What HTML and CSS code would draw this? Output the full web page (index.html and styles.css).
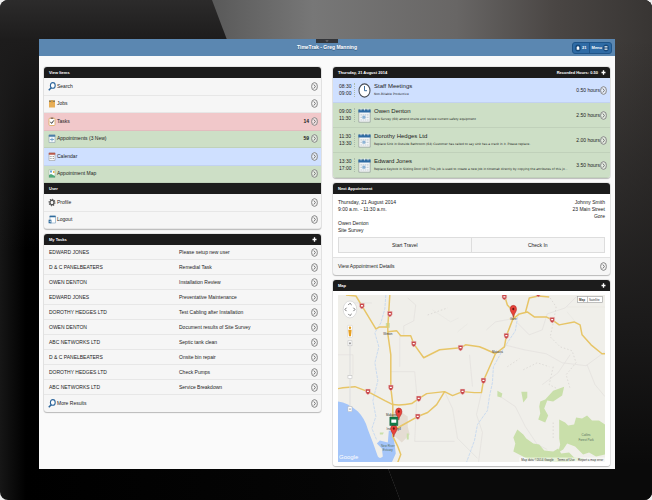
FILE: index.html
```html
<!DOCTYPE html>
<html lang="en">
<head>
<meta charset="utf-8">
<meta name="viewport" content="width=device-width, initial-scale=1">
<title>TimeTrak - Greg Manning</title>
<link rel="stylesheet" href="styles.css">
</head>
<body>
<svg class="sprites" aria-hidden="true">
  <symbol id="go" viewBox="0 0 7 9"><ellipse cx="3.5" cy="4.5" rx="2.9" ry="3.9" fill="#f4f4f4" fill-opacity=".6" stroke="#868686" stroke-width="1"/><path d="M2.8 2.5 4.4 4.5 2.8 6.500" fill="none" stroke="#777" stroke-width="1"/></symbol>
  <symbol id="search" viewBox="0 0 8 9"><ellipse cx="4.8" cy="3.4" rx="2.4" ry="2.8" fill="#fff" stroke="#2d659b" stroke-width="1.1"/><path d="M3.2 5.7.8 8.3" stroke="#2d659b" stroke-width="1.5"/></symbol>
  <symbol id="box" viewBox="0 0 8 9"><path d="M1 1.5h6v7H1z" fill="#e8ae55"/><path d="M1 1.5h6v1.4H1z" fill="#8a7a55"/><path d="M3 1.5h2v2H3z" fill="#d69a3c"/></symbol>
  <symbol id="task" viewBox="0 0 8 9"><rect x="1" y="1.2" width="6" height="7.3" rx="1" fill="#fff" stroke="#dda85a" stroke-width=".8"/><path d="M2.7.5h2.6v1.4H2.7z" fill="#8a7060"/><path d="m2.4 4.8 1.2 1.6 2.2-3" fill="none" stroke="#333" stroke-width="1"/></symbol>
  <symbol id="cal" viewBox="0 0 8 9"><path d="M1 1h6v7.5H1z" fill="#f2f7fa" stroke="#8aa0ad" stroke-width=".6"/><path d="M.8.8h6.4v2H.8z" fill="#4a7ea8"/><path d="M2 5.5h4M4 3.8v3.5" stroke="#6f9fc8" stroke-width=".9"/></symbol>
  <symbol id="calred" viewBox="0 0 8 9"><path d="M1 1h6v7.5H1z" fill="#fafafa" stroke="#9a9a9a" stroke-width=".6"/><path d="M.8.8h6.4v2H.8z" fill="#b9584a"/><path d="M1.8 4.5h4.4M1.8 6.5h4.4" stroke="#999" stroke-width=".9" stroke-dasharray="1 .6"/></symbol>
  <symbol id="map" viewBox="0 0 8 9"><path d="M1 .8h6v7.7H1z" fill="#fff" stroke="#9cb59c" stroke-width=".6"/><path d="m1 6 2-1 2 1 2 1v1.5H1z" fill="#50a878"/><path d="M2 1.5h2v2H2z" fill="#6aa5d8"/><path d="M5 2h1.5v2H5z" fill="#e7b44f"/></symbol>
  <symbol id="gear" viewBox="0 0 8 9"><ellipse cx="4" cy="4.5" rx="2.9" ry="3.3" fill="none" stroke="#4c4c4c" stroke-width="1.1" stroke-dasharray="1.2 1.2"/><ellipse cx="4" cy="4.5" rx="2" ry="2.4" fill="none" stroke="#4c4c4c" stroke-width="1.2"/></symbol>
  <symbol id="exit" viewBox="0 0 8 9"><path d="M2 1h5.5v7H2z" fill="#fff" stroke="#7ba0bd" stroke-width=".6"/><path d="M1.6.7h6v1.6h-6z" fill="#2f6b9d"/><path d="M.6 4.8h2.8v3.4H.6z" fill="#2f6b9d"/><path d="m1.4 6.5 1.2-.9v1.8z" fill="#fff"/></symbol>
  <symbol id="clock" viewBox="0 0 13 15"><ellipse cx="6.5" cy="7.5" rx="5.5" ry="6.6" fill="#fff" stroke="#4a4f57" stroke-width="1.1"/><path d="M6.5 3v4.7H9" fill="none" stroke="#3e6f9e" stroke-width="1"/></symbol>
  <symbol id="bigcal" viewBox="0 0 13 15"><path d="M.8 1.8h11.4v12.4H.8z" fill="#f4f6f7" stroke="#97a29a" stroke-width=".8"/><path d="M.4 1.4h12.2v3.2H.4z" fill="#2e6ba3"/><path d="M3 0v2.4M6.5 0v2.4M10 0v2.4" stroke="#dfe8ef" stroke-width=".9"/><path d="M2.4 6.8h8.4M2.4 9.4h8.4M2.4 12h8.4" stroke="#c6d0d8" stroke-width="1.2" stroke-dasharray="1.6 .6"/><path d="M4.4 7.7h3v3h-3z" fill="#8db4d6"/></symbol>
  <symbol id="plus" viewBox="0 0 6 7"><path d="M3 .8v5.4M.6 3.5h4.8" stroke="#fff" stroke-width="1.6"/></symbol>
</svg>
<div class="tablet">
<div class="screen">
  <header class="topbar">
    <span class="pull" aria-hidden="true"><svg viewBox="0 0 22 4"><path d="m10 1.2 1 1.3 1-1.3" fill="none" stroke="#aaa" stroke-width=".6"/></svg></span>
    <h1>TimeTrak - Greg Manning</h1>
    <div class="actions">
      <button type="button"><svg class="ai" viewBox="0 0 7 9"><ellipse cx="3.5" cy="4.5" rx="3.3" ry="4" fill="#194a7b"/><path d="M3.5 2 5 4v2.5H2V4z" fill="#fff"/></svg>21</button>
      <button type="button">Menu<svg class="ai" viewBox="0 0 7 9"><ellipse cx="3.5" cy="4.5" rx="3.3" ry="4" fill="#194a7b"/><path d="M1.8 2.8h3.4M1.8 4.5h3.4M1.8 6.2h3.4" stroke="#fff" stroke-width=".9"/></svg></button>
    </div>
  </header>
  <main class="columns">
    <div class="column">
      <nav class="panel">
        <h2>View Items</h2>
        <ul class="menu six">
          <li><a href="#"><svg class="ic"><use href="#search"/></svg>Search<svg class="go"><use href="#go"/></svg></a></li>
          <li><a href="#"><svg class="ic"><use href="#box"/></svg>Jobs<svg class="go"><use href="#go"/></svg></a></li>
          <li class="red"><a href="#"><svg class="ic"><use href="#task"/></svg>Tasks<b class="count">14</b><svg class="go"><use href="#go"/></svg></a></li>
          <li class="green"><a href="#"><svg class="ic"><use href="#cal"/></svg>Appointments (3 New)<b class="count">59</b><svg class="go"><use href="#go"/></svg></a></li>
          <li class="blue"><a href="#"><svg class="ic"><use href="#calred"/></svg>Calendar<svg class="go"><use href="#go"/></svg></a></li>
          <li class="green"><a href="#"><svg class="ic"><use href="#map"/></svg>Appointment Map<svg class="go"><use href="#go"/></svg></a></li>
        </ul>
        <h2>User</h2>
        <ul class="menu two">
          <li><a href="#"><svg class="ic"><use href="#gear"/></svg>Profile<svg class="go"><use href="#go"/></svg></a></li>
          <li><a href="#"><svg class="ic"><use href="#exit"/></svg>Logout<svg class="go"><use href="#go"/></svg></a></li>
        </ul>
      </nav>
      <section class="panel">
        <h2>My Tasks<svg class="plus"><use href="#plus"/></svg></h2>
        <ul class="tasks">
          <li><a href="#"><span>EDWARD JONES</span><span>Please setup new user</span><svg class="go"><use href="#go"/></svg></a></li>
          <li><a href="#"><span>D &amp; C PANELBEATERS</span><span>Remedial Task</span><svg class="go"><use href="#go"/></svg></a></li>
          <li><a href="#"><span>OWEN DENTON</span><span>Installation Review</span><svg class="go"><use href="#go"/></svg></a></li>
          <li><a href="#"><span>EDWARD JONES</span><span>Preventative Maintenance</span><svg class="go"><use href="#go"/></svg></a></li>
          <li><a href="#"><span>DOROTHY HEDGES LTD</span><span>Test Cabling after Installation</span><svg class="go"><use href="#go"/></svg></a></li>
          <li><a href="#"><span>OWEN DENTON</span><span>Document results of Site Survey</span><svg class="go"><use href="#go"/></svg></a></li>
          <li><a href="#"><span>ABC NETWORKS LTD</span><span>Septic tank clean</span><svg class="go"><use href="#go"/></svg></a></li>
          <li><a href="#"><span>D &amp; C PANELBEATERS</span><span>Onsite bin repair</span><svg class="go"><use href="#go"/></svg></a></li>
          <li><a href="#"><span>DOROTHY HEDGES LTD</span><span>Check Pumps</span><svg class="go"><use href="#go"/></svg></a></li>
          <li><a href="#"><span>ABC NETWORKS LTD</span><span>Service Breakdown</span><svg class="go"><use href="#go"/></svg></a></li>
        </ul>
        <div class="menu one"><a href="#"><svg class="ic"><use href="#search"/></svg>More Results<svg class="go"><use href="#go"/></svg></a></div>
      </section>
    </div>
    <div class="column">
      <section class="panel">
        <h2>Thursday, 21 August 2014<span class="recorded">Recorded Hours: 0.50</span><svg class="plus"><use href="#plus"/></svg></h2>
        <ul class="agenda">
          <li class="blue"><a href="#"><span class="time">08:30<br>09:00</span><svg class="big"><use href="#clock"/></svg><span class="what"><strong>Staff Meetings</strong><small>Non-Billable Productive</small></span><span class="hours">0.50 hours</span><svg class="go"><use href="#go"/></svg></a></li>
          <li class="green"><a href="#"><span class="time">09:00<br>11:30</span><svg class="big"><use href="#bigcal"/></svg><span class="what"><strong>Owen Denton</strong><small>Site Survey (60) attend onsite and review current safety equipment</small></span><span class="hours">2.50 hours</span><svg class="go"><use href="#go"/></svg></a></li>
          <li class="green"><a href="#"><span class="time">11:30<br>13:30</span><svg class="big"><use href="#bigcal"/></svg><span class="what"><strong>Dorothy Hedges Ltd</strong><small>Replace Sink in Outside Bathroom (64) Customer has called to say sink has a crack in it. Please replace.</small></span><span class="hours">2.00 hours</span><svg class="go"><use href="#go"/></svg></a></li>
          <li class="green"><a href="#"><span class="time">13:30<br>17:00</span><svg class="big"><use href="#bigcal"/></svg><span class="what"><strong>Edward Jones</strong><small>Replace Keylock in Sliding Door (40) This job is used to create a new Job in timetrak directly by copying the attributes of this jo...</small></span><span class="hours">3.50 hours</span><svg class="go"><use href="#go"/></svg></a></li>
        </ul>
      </section>
      <section class="panel">
        <h2>Next Appointment</h2>
        <div class="next">
          <div class="details">
            <p>Thursday, 21 August 2014<br>9:00 a.m. - 11:30 a.m.<br><br>Owen Denton<br>Site Survey</p>
            <p class="address">Johnny Smith<br>23 Main Street<br>Gore</p>
          </div>
          <div class="choices"><button type="button">Start Travel</button><button type="button">Check In</button></div>
        </div>
        <div class="menu one view"><a href="#">View Appointment Details<svg class="go"><use href="#go"/></svg></a></div>
      </section>
      <section class="panel">
        <h2>Map<svg class="plus"><use href="#plus"/></svg></h2>
        <div class="mapbox">
          <svg class="mapview" viewBox="0 0 268 168" role="img" aria-label="Map of appointments">
            <defs>
              <g id="shield"><path d="M-2.4-2.600h4.8v2.8Q2.200 2.400 0 3.100-2.200 2.400-2.400.2z" fill="#c9474a" stroke="#f0d8d5" stroke-width=".5"/><path d="M-1-.2h2" stroke="#fff" stroke-width="1.3"/></g>
              <g id="pin"><path d="M0 8.600C-.4 4.600-3.200 3.400-3.200.2A3.200 3.800 0 0 1 3.200.2C3.200 3.400.4 4.600 0 8.600z" fill="#e8423a" stroke="#a52b25" stroke-width=".5"/><ellipse rx="1" ry="1.300" fill="#6d1511"/></g>
            </defs>
            <rect width="268" height="168" fill="#f0efea"/>
            <g fill="none" stroke="#e2e0dc" stroke-width=".7">
              <path d="M0 60h15v20M10 8h24M70 3l8 7-2 16-10 5v9M53 77h24l2 22M62 40v32M79 102l-2 45h40M107 97l8 17 5 30 20 20M144 98l-5 22 6 18-4 30M132 60l3 32M0 120h20"/>
              <path d="M149 35l9-8 16-3M180 28l12 12 13-5 5-16 18-6 12-12M167 50l20 5 22 4 16 9 24 3 19-14M160 100l18 12 10 20 12 18 10 5M250 70l8 20 10 12M205 90l16-12 12-18"/>
              <path d="M230 12h38M230 17l10 12M95 15l18 12 8-4M120 37l10-8" stroke="#e8e6e2"/>
            </g>
            <g fill="none" stroke="#d8d6d2" stroke-width=".8" stroke-dasharray="1.5 2"><path d="M213 3l6 9-3 16-3 14 10 10 12 4 4 12-10 12 4 14M216 72l-4 18 8 4M216 128v16M90 20l20-7M186 75l14-7 12 4M170 72l12-8"/></g>
            <g fill="none" stroke="#c5d8ef" stroke-width=".9" stroke-dasharray="3 1"><path d="M48 0l-1 14-4 14-6 10 4 14-4 16 3 18-5 20 3 16-4 12 5 12"/><path d="M181 18l-3 18-12 18-10 18-1 16-3 14-2 14-10 14-3 16-8 22"/></g>
            <path d="M0 107q10 1 20 10 7 7 10 18l5 13 5 14q2 3 5 0l-1-8-5-5 3-3 8 2 1-12 4 1 2 14 1 8-4 9H0z" fill="#a4c5f9"/>
            <path d="M52 119l9-3 9 6v10l2 8-8 8-9-8z" fill="#e5ddd3"/>
            <g fill="#c9dfaa">
              <path d="M180 135l6 5 3 4 7 5 6 1 5 6 9 1 5-3 3 5 8-1 5 5 10 1-3 2-18 2-20-1-15-2-15-8 2-8-2-6z"/>
              <path d="M222 125l6 3 3 3 6-1 2-7 6 1 5-3 5 5 7 0 6 4v30l-9 2-7-4-6 2-8-8-8-3-4 6-5 3 2-8-1-6z"/>
              <path d="M203 107l5-2 8-9 11-4-2 9-9 6-6-1-3 8 4 7-3 7-7-3 2-6-1-7zM184 97h6v6l-4 5zM160 96l5 3-1 4-4-1zM42 138l4 0-1 2h-3zM69 139h2v6h-2zM48 28h4v5h-4z"/>
            </g>
            <g fill="none" stroke="#e7c567" stroke-width="1.500" stroke-linejoin="round">
              <path d="M8 0l10 1 6 10 14 23 4-2h7M52 0l-2 32v7l3 21v33l2 17v32l5 10 3 8-3 8"/>
              <path d="M50 37l9-1 4 5h10l3 8 10 14 6-3 10-5 21-2 5-3 14 2 5 2 11 5"/>
              <path d="M176 23l-7 18-2 11-9 7-8 18-4 9-2 12h-7l-12-1-10 4-8-4-18 2-8 5-7 5q-10 2-19 1l-8-4-17-9-13-5-12 1-5 1"/>
              <path d="M107 97l-8 13-9 8-10 4-16 9-7 4M167 0l3 10 7 8-1 6 6-5 8-2 7 5h12l6 3 7 5 15-3 6 3 2 10 9 10 11 9h3M188 18l4-15 9-2 11 1"/>
            </g>
            <use href="#shield" x="24" y="11"/><use href="#shield" x="52" y="19"/><use href="#shield" x="76" y="49"/><use href="#shield" x="123" y="53"/><use href="#shield" x="167" y="2"/><use href="#shield" x="201" y="-1"/><use href="#shield" x="215" y="25"/><use href="#shield" x="169" y="41"/><use href="#shield" x="146" y="86"/><use href="#shield" x="125" y="97"/><use href="#shield" x="30" y="97"/><use href="#shield" x="53" y="93"/><use href="#shield" x="81" y="104"/><use href="#shield" x="80" y="122"/>
            <g class="place"><text x="50" y="40">Winton</text><text x="160" y="58">Mataura</text><text x="176" y="25">Gore</text><text x="55" y="121">Makarewa</text><text x="56" y="136">Invercargill</text></g>
            <g class="place soft"><text x="50" y="153">New River</text><text x="50" y="157">Estuary</text><text x="249" y="142">Catlins</text><text x="249" y="147">Forest Park</text></g>
            <use href="#pin" x="176" y="14"/><use href="#pin" x="61" y="117"/><use href="#pin" x="56" y="134"/>
            <path d="M52 122.500h8v8.500h-8z" fill="#137a48" stroke="#0a5932" stroke-width=".5"/><path d="M53.500 125h5v3.300h-5z" fill="#fff"/>
            <g><ellipse cx="12" cy="14.500" rx="6.800" ry="8.500" fill="#fff" stroke="#ccc" stroke-width=".6"/><path d="M10.300 10 12 8.300l1.700 1.700M10.300 19l1.700 1.700 1.700-1.700M8.500 12.800 7 14.500l1.500 1.700M15.500 12.800l1.500 1.700-1.500 1.700" fill="none" stroke="#666" stroke-width=".9"/></g>
            <path d="M11.500 50h1v62h-1z" fill="#ddd"/>
            <rect x="9.500" y="30.500" width="5" height="12" rx="1" fill="#fff" stroke="#ccc" stroke-width=".5"/><ellipse cx="12" cy="33" rx="1.200" ry="1.500" fill="#e6a023"/><path d="M10.300 35h3.400l-.7 6.500h-2z" fill="#e6a023"/>
            <g fill="#fff" stroke="#bbb" stroke-width=".5"><rect x="10" y="46" width="4" height="5"/><rect x="10" y="81" width="4" height="3"/><rect x="10" y="112" width="4" height="5"/></g><path d="M11 48.500h2M12 47.300v2.400M11 114.500h2" stroke="#777" stroke-width=".7"/>
            <rect x="240.500" y="1.500" width="25" height="6" fill="#fff" stroke="#999" stroke-width=".6"/><path d="M250.500 1.500v6" stroke="#999" stroke-width=".6"/>
            <text class="mt strong" x="242" y="5.700">Map</text><text class="mt" x="252" y="5.700">Satellite</text>
            <text class="google" x="1" y="165">Google</text>
            <path d="M182 163h86v5h-86z" fill="#fff" fill-opacity=".55"/>
            <text class="mt" x="184" y="166.500">Map data ©2014 Google</text><text class="mt" x="220" y="166.500">Terms of Use</text><text class="mt" x="241" y="166.500">Report a map error</text>
          </svg>
        </div>
      </section>
    </div>
  </main>
</div>
</div>
</body>
</html>
```
FILE: styles.css
```css
* { box-sizing: border-box; }
body { margin: 0; background: #eee; font-family: "Liberation Sans", sans-serif; font-size: 5px; line-height: 7px; color: #1c1c1c; }
h1, h2, p, ul { margin: 0; padding: 0; }
ul { list-style: none; }
a { color: inherit; text-decoration: none; }
button { font: inherit; color: inherit; padding: 0; }
.sprites { display: none; }
.tablet {
  position: relative; display: flex; min-height: 100vh; padding: 39px 37px 31px 39px; overflow: hidden; border-radius: 8px;
  background: linear-gradient(90deg, #161616, #000 4%, #050505 50%, #111);
}
.tablet::before {
  content: ""; position: absolute; inset: 0;
  background: linear-gradient(180deg, #2c2b2b, #1d1c1c 8%, transparent 50%);
}
.tablet::after {
  content: ""; position: absolute; inset: 0; clip-path: polygon(212px 0, 100% 0, 100% 100%, 400px 100%);
  background: linear-gradient(180deg, transparent 8%, #1b1a1a 65%, #0a0a0a 93%), linear-gradient(90deg, #5a5a5a 33%, #777 48%, #686665 70%, #4a4644 85%, #383533);
}
.screen { position: relative; z-index: 1; flex: 1; background: #fafafa; }
.topbar { position: relative; display: grid; grid-template-columns: 1fr auto 1fr; align-items: center; height: 17px; padding: 0 3px; background: #5b87b1; color: #fff; }
.topbar h1 { grid-column: 2; font-size: 5px; line-height: 7px; text-shadow: 0 1px 0 #3a6288; }
.pull { position: absolute; top: 0; left: 50%; width: 22px; height: 4px; margin-left: -11px; background: #333539; }
.pull svg { display: block; width: 100%; height: 100%; }
.actions { justify-self: end; display: flex; border: 1px solid #1f5488; border-radius: 3px; background: #2f6ba5; }
.actions button { display: flex; align-items: center; justify-content: center; gap: 1px; height: 10px; padding: 0 2px; border: 0; background: none; color: #fff; font-size: 4px; font-weight: bold; }
.actions button + button { border-left: 1px solid #1f5488; }
.ai { width: 6px; height: 8px; }
.columns { display: grid; grid-template-columns: 1fr 1fr; gap: 12px; padding: 11px 5px 2px; }
.column { display: flex; flex-direction: column; gap: 5px; min-width: 0; }
.panel { overflow: hidden; border-radius: 3px; background: #f6f6f6; box-shadow: 0 1px 1px #bbb, 0 0 0 1px #e6e6e6; }
.panel h2 { display: flex; align-items: center; gap: 3px; height: 11px; padding: 0 4px 0 5px; background: #1c1c1c; color: #fff; font-size: 4px; line-height: 7px; }
.recorded { margin-left: auto; }
.plus { width: 5px; height: 7px; margin-left: auto; }
.recorded + .plus { margin-left: 0; }
.menu a { display: flex; align-items: center; height: 100%; padding: 0 3px 0 4px; }
.view a { padding-left: 5px; }
.menu li, .tasks li, .agenda li { border-bottom: 1px solid rgba(0, 0, 0, .06); }
.six, .two { display: grid; grid-auto-rows: 1fr; }
.six { height: 105px; }
.two { height: 35px; }
.one { height: 17px; }
.ic { width: 8px; height: 9px; margin-right: 1px; }
.go { flex: none; width: 7px; height: 9px; margin-left: auto; }
.count { margin-left: auto; }
.count + .go { margin-left: 2px; }
.red { background: #f1c8ca; }
.green { background: #cddfc6; }
.blue { background: #cfe0ff; }
.tasks a { display: grid; grid-template-columns: 130px 1fr auto; align-items: center; height: 14px; padding: 0 3px 0 5px; }
.agenda a { display: flex; align-items: center; height: 24px; padding: 0 3px 0 6px; }
.time { width: 16px; border-right: 1px dotted #aabbaa; line-height: 7px; }
.big { flex: none; width: 13px; height: 15px; margin: 0 3px; }
.what { flex: 1; min-width: 0; }
.what strong, .what small { display: block; white-space: nowrap; }
.what strong { font-weight: normal; font-size: 6px; line-height: 8px; }
.what small { font-family: "DejaVu Sans", sans-serif; font-size: 3px; line-height: 8px; }
.hours { white-space: nowrap; }
.agenda .go { margin-left: 0; }
.next { padding: 5px 5px 4px; background: #fff; border-bottom: 1px solid #e2e2e2; }
.details { display: flex; justify-content: space-between; }
.address { text-align: right; }
.choices { display: grid; grid-template-columns: 1fr 1fr; margin-top: 3px; }
.choices button { height: 16px; border: 1px solid #ddd; background: #f6f6f6; }
.choices button + button { border-left: 0; }
.mapbox { padding: 4px 5px; background: #fff; }
.mapview { display: block; width: 100%; height: auto; }
.place { font-size: 3px; fill: #333; text-anchor: middle; }
.soft { fill: #567060; }
.mt { font-size: 3px; fill: #333; }
.strong { font-weight: bold; }
.google { font-size: 6px; fill: #fff; stroke: none; }
```
